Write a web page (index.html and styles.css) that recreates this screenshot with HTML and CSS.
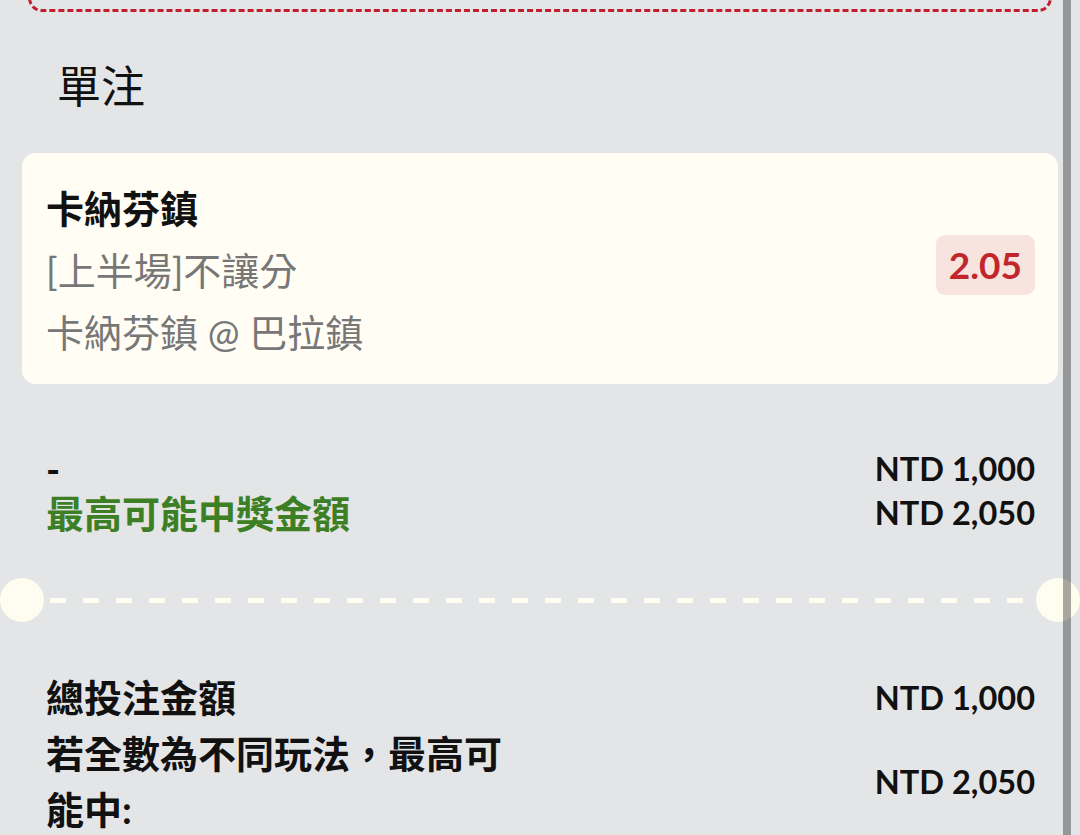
FILE: index.html
```html
<!DOCTYPE html>
<html lang="zh-Hant">
<head>
  <meta charset="UTF-8" />
  <meta name="viewport" content="width=device-width, initial-scale=1.0"/>
  <title>單注</title>
  <link rel="stylesheet" href="styles.css">
</head>
<body>
  <div class="slip">
    <div class="prev-ticket"></div>

    <h2 class="section-title">單注</h2>

    <div class="bet-card">
      <div class="bet-info">
        <div class="bet-team">卡納芬鎮</div>
        <div class="bet-market">[上半場]不讓分</div>
        <div class="bet-match">卡納芬鎮 @ 巴拉鎮</div>
      </div>
      <div class="odds">2.05</div>
    </div>

    <div class="summary-row">
      <div class="summary-label">
        <div>-</div>
        <div class="win-label">最高可能中獎金額</div>
      </div>
      <div class="summary-values">
        <div>NTD 1,000</div>
        <div>NTD 2,050</div>
      </div>
    </div>

    <div class="ticket-divider">
      <span class="notch"></span>
      <span class="dash-line"></span>
      <span class="notch"></span>
    </div>

    <div class="totals">
      <div class="total-row">
        <div class="total-label">總投注金額</div>
        <div class="total-value">NTD 1,000</div>
      </div>
      <div class="total-row">
        <div class="total-label">若全數為不同玩法，最高可能中:</div>
        <div class="total-value">NTD 2,050</div>
      </div>
    </div>
  </div>

  <div class="scrollbar"></div>
</body>
</html>
```

FILE: styles.css
```css
* {
  margin: 0;
  padding: 0;
  box-sizing: border-box;
}

body, html {
  height: 100%;
  width: 100%;
  overflow: hidden;
  font-family: Lato, 'Noto Sans CJK TC', sans-serif;
  background-color: #e4e5e7;
  color: #111;
}

.slip {
  display: flex;
  flex-direction: column;
}

/* bottom edge of the ticket above */
.prev-ticket {
  height: 26px;
  margin: -14px 28px 0;
  border: 3px dashed #c21f2e;
  border-top: none;
  border-radius: 0 0 14px 14px;
}

.section-title {
  font-size: 44px;
  font-weight: 400;
  line-height: 56px;
  padding-left: 57px;
  margin-top: 46px;
  color: #111;
}

.bet-card {
  margin: 39px 22px 0;
  padding: 24px 23px 21px 24px;
  background: #fffdf4;
  border-radius: 14px;
  display: flex;
  align-items: center;
  justify-content: space-between;
}

.bet-info {
  font-size: 38px;
  line-height: 62px;
  color: #777;
}

.bet-team {
  font-weight: 700;
  color: #111;
}

.odds {
  background: #f7e4de;
  color: #c0262c;
  font-weight: 700;
  font-size: 37px;
  line-height: 44px;
  padding: 8px 13px;
  margin-bottom: 10px;
  border-radius: 9px;
}

.summary-row {
  margin-top: 63px;
  padding: 0 45px 0 46px;
  display: flex;
  justify-content: space-between;
  font-weight: 700;
  line-height: 44px;
}

.summary-label {
  font-size: 38px;
}

.win-label {
  color: #3d7f24;
}

.summary-values {
  font-size: 32.5px;
  text-align: right;
}

.ticket-divider {
  margin-top: 43px;
  display: flex;
  align-items: center;
}

.notch {
  width: 44px;
  height: 44px;
  border-radius: 50%;
  background: #fffdf0;
  flex-shrink: 0;
}

.dash-line {
  flex: 1;
  height: 5px;
  margin: 0 6px;
  background: repeating-linear-gradient(to right, #fffdf0 0 16px, transparent 16px 33px);
}

.totals {
  margin-top: 47px;
  padding: 0 45px 0 46px;
  display: flex;
  flex-direction: column;
}

.total-row {
  display: flex;
  align-items: center;
  justify-content: space-between;
}

.total-label {
  width: 474px;
  font-size: 38px;
  font-weight: 700;
  line-height: 56px;
}

.total-value {
  font-size: 32.5px;
  font-weight: 700;
}

.scrollbar {
  position: fixed;
  top: 0;
  bottom: 0;
  left: 1063px;
  width: 8px;
  background: rgba(0, 0, 0, 0.34);
}
```
